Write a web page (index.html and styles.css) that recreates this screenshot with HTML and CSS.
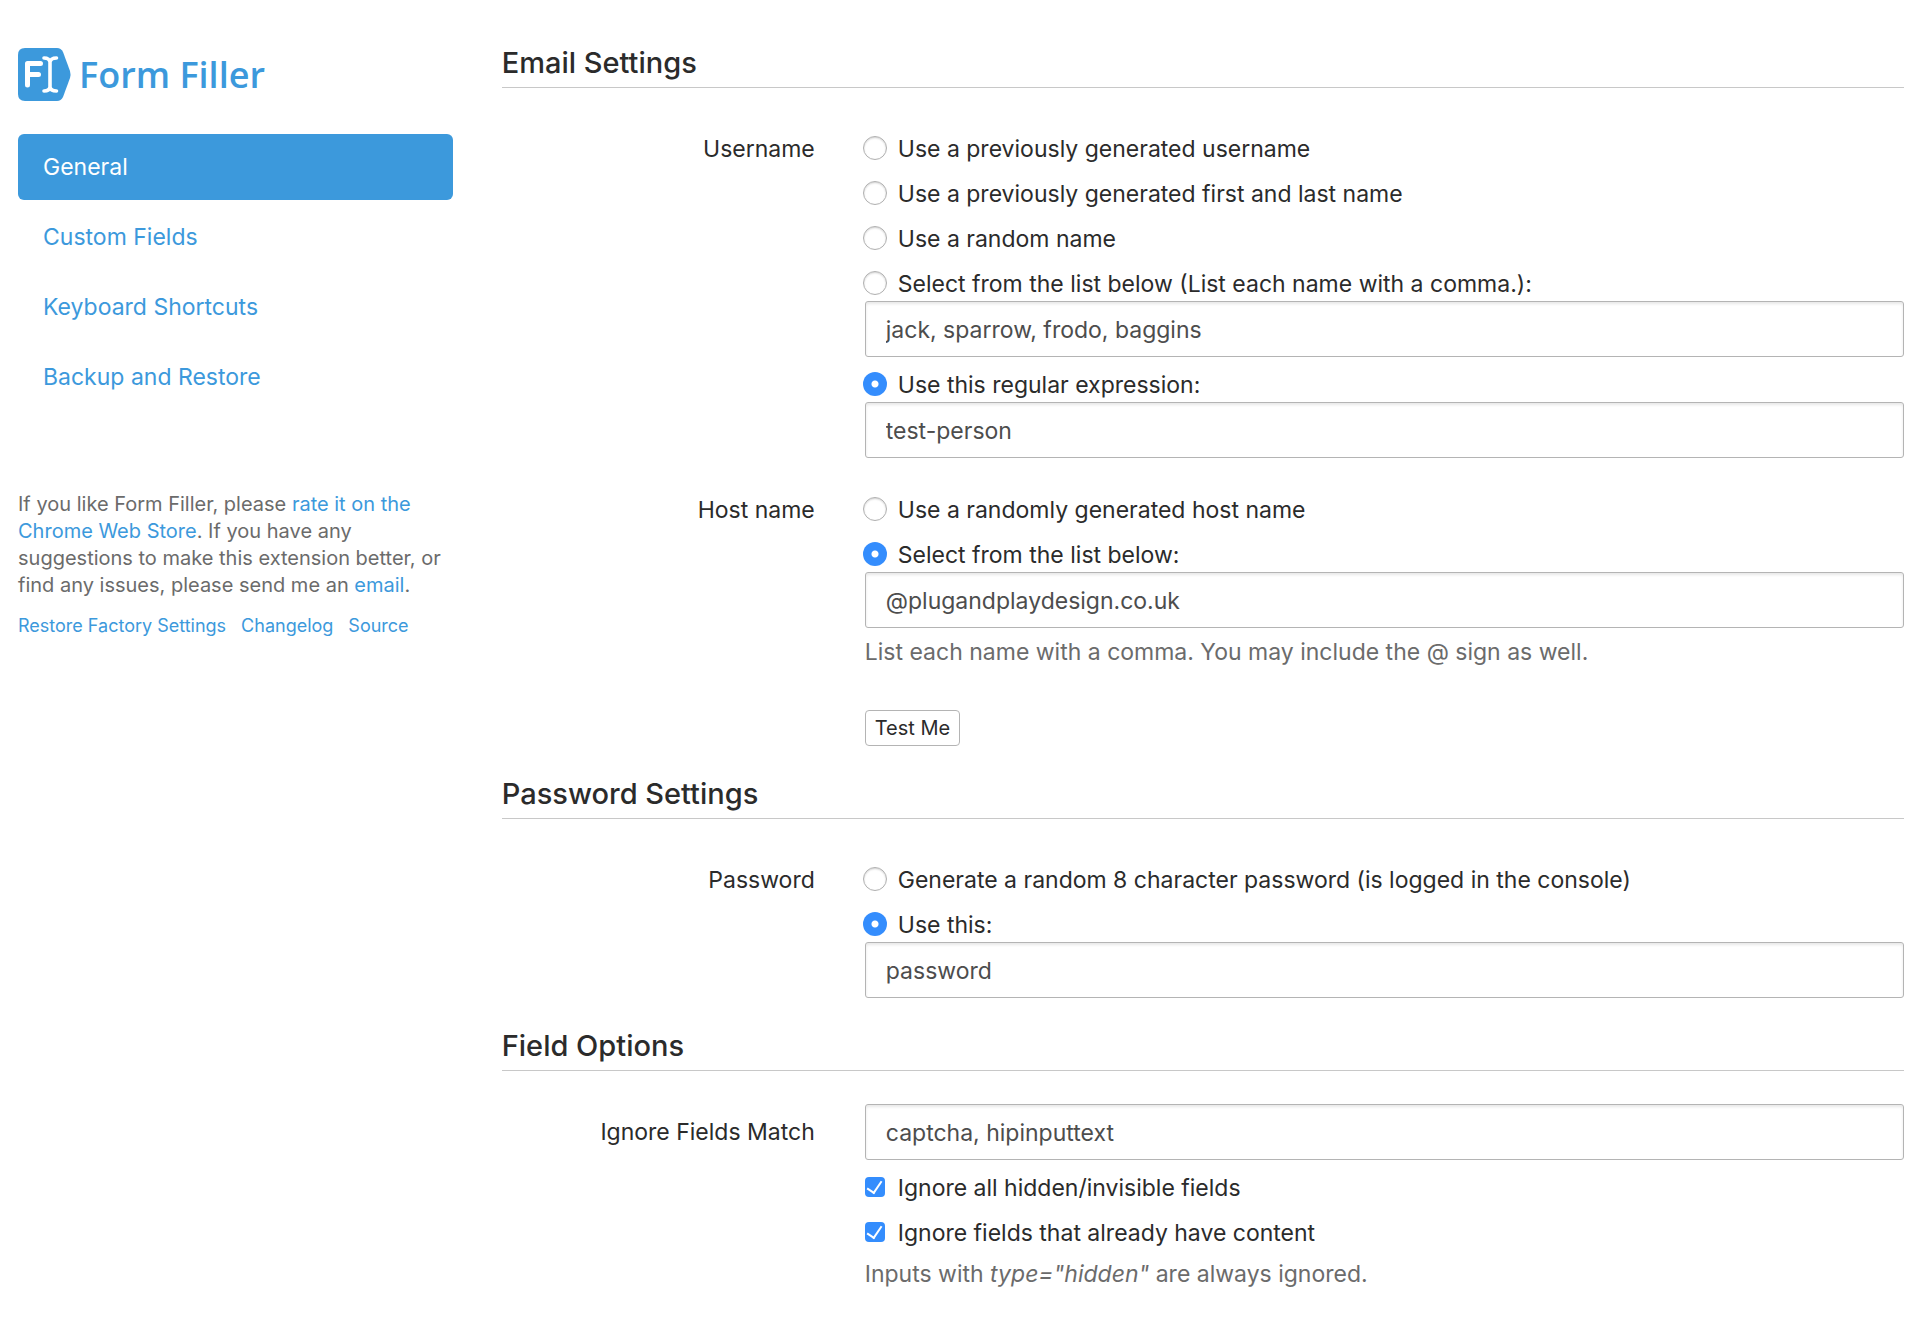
FILE: index.html
```html
<!DOCTYPE html>
<html lang="en">
<head>
<meta charset="utf-8">
<title>Form Filler</title>
<link rel="stylesheet" href="styles.css">
</head>
<body>
<div class="page">
  <aside class="sidebar">
    <div class="brand">
      <svg class="brand-mark" viewBox="0 0 53 53" aria-hidden="true">
        <path fill="#3c99dc" d="M7 0H39Q43 0 45 4L52 23Q53 26.500 52 30L45 49Q43 53 39 53H7Q0 53 0 46V7Q0 0 7 0Z"/>
        <path fill="none" stroke="#fff" stroke-width="5" stroke-linecap="round" stroke-linejoin="round" d="M9.500 37V15.500H22.500M9.500 26.500H20.500"/>
        <path fill="none" stroke="#fff" stroke-width="3.600" stroke-linecap="round" stroke-linejoin="round" d="M26 10C29.500 10 31.500 11 32 14C32.500 11 34.500 10 38.500 10M32 14V39M26 43C29.500 43 31.500 42 32 39C32.500 42 34.500 43 38.500 43"/>
      </svg>
      <span class="brand-name">Form Filler</span>
    </div>
    <nav class="nav">
      <a class="nav-link nav-link-active" href="#general">General</a>
      <a class="nav-link" href="#custom-fields">Custom Fields</a>
      <a class="nav-link" href="#keyboard-shortcuts">Keyboard Shortcuts</a>
      <a class="nav-link" href="#backup">Backup and Restore</a>
    </nav>
    <p class="note">If you like Form Filler, please <a href="#rate">rate it on the Chrome Web Store</a>. If you have any suggestions to make this extension better, or find any issues, please send me an <a href="#email">email</a>.</p>
    <div class="links">
      <a href="#restore">Restore Factory Settings</a>
      <a href="#changelog">Changelog</a>
      <a href="#source">Source</a>
    </div>
  </aside>

  <main>
    <form class="settings">
      <section>
        <h2 class="heading">Email Settings</h2>
        <div class="row" role="radiogroup" aria-labelledby="username-label">
          <div class="row-label" id="username-label">Username</div>
          <div class="fields">
            <label class="option"><input type="radio" name="username">Use a previously generated username</label>
            <label class="option"><input type="radio" name="username">Use a previously generated first and last name</label>
            <label class="option"><input type="radio" name="username">Use a random name</label>
            <label class="option"><input type="radio" name="username">Select from the list below (List each name with a comma.):</label>
            <input class="text" type="text" aria-label="Username list" value="jack, sparrow, frodo, baggins">
            <label class="option"><input type="radio" name="username" checked>Use this regular expression:</label>
            <input class="text" type="text" aria-label="Username regular expression" value="test-person">
          </div>
        </div>
        <div class="row" role="radiogroup" aria-labelledby="host-label">
          <div class="row-label" id="host-label">Host name</div>
          <div class="fields">
            <label class="option"><input type="radio" name="host">Use a randomly generated host name</label>
            <label class="option"><input type="radio" name="host" checked>Select from the list below:</label>
            <input class="text" type="text" aria-label="Host name list" value="@plugandplaydesign.co.uk">
            <p class="help">List each name with a comma. You may include the @ sign as well.</p>
            <button class="button" type="button">Test Me</button>
          </div>
        </div>
      </section>

      <section>
        <h2 class="heading">Password Settings</h2>
        <div class="row" role="radiogroup" aria-labelledby="password-label">
          <div class="row-label" id="password-label">Password</div>
          <div class="fields">
            <label class="option"><input type="radio" name="password">Generate a random 8 character password (is logged in the console)</label>
            <label class="option"><input type="radio" name="password" checked>Use this:</label>
            <input class="text" type="text" aria-label="Password" value="password">
          </div>
        </div>
      </section>

      <section>
        <h2 class="heading">Field Options</h2>
        <div class="row">
          <label class="row-label" for="ignore-match">Ignore Fields Match</label>
          <div class="fields">
            <input class="text" type="text" id="ignore-match" value="captcha, hipinputtext">
            <label class="option"><input type="checkbox" checked>Ignore all hidden/invisible fields</label>
            <label class="option"><input type="checkbox" checked>Ignore fields that already have content</label>
            <p class="help">Inputs with <em>type="hidden"</em> are always ignored.</p>
          </div>
        </div>
      </section>
    </form>
  </main>
</div>
</body>
</html>
```
FILE: styles.css
```css
* {
  box-sizing: border-box;
}

body {
  margin: 0;
  background: #fff;
  color: #2b2b2b;
  font-family: Inter, "Liberation Sans", sans-serif;
  font-size: 23px;
  line-height: 33px;
}

a {
  color: #3c99dc;
  text-decoration: none;
}

.page {
  display: grid;
  grid-template-columns: minmax(0, 31fr) minmax(0, 100fr);
  column-gap: 49px;
  padding: 43px 20px 32px 18px;
}

/* Sidebar */

.brand {
  display: flex;
  align-items: center;
  gap: 8px;
  padding-top: 5px;
}

.brand-mark {
  width: 53px;
  height: 53px;
}

.brand-name {
  color: #3c99dc;
  font-family: "Open Sans", "Noto Sans", sans-serif;
  font-size: 36px;
  font-weight: 600;
}

.nav {
  display: flex;
  flex-direction: column;
  gap: 4px;
  margin-top: 33px;
}

.nav-link {
  padding: 17px 25px 16px;
  border-radius: 6px;
}

.nav-link-active {
  background: #3c99dc;
  color: #fff;
}

.note {
  margin: 81px 0 0;
  color: #6b6b6b;
  font-size: 20px;
  line-height: 27px;
}

.links {
  display: flex;
  flex-wrap: wrap;
  gap: 0 15px;
  margin-top: 13px;
  font-size: 18px;
  line-height: 27px;
}

/* Settings form */

.settings {
  display: flex;
  flex-direction: column;
  gap: 28px;
}

.heading {
  margin: 0 0 33px;
  padding-bottom: 4px;
  border-bottom: 1px solid #c8c8c8;
  font-size: 29px;
  font-weight: 500;
  line-height: 40px;
}

.row {
  display: grid;
  grid-template-columns: minmax(0, 313fr) minmax(0, 1039fr);
  column-gap: 50px;
}

.row + .row {
  margin-top: 24px;
}

.row-label {
  padding-top: 12px;
  text-align: right;
}

.fields {
  display: flex;
  flex-direction: column;
}

.option {
  display: flex;
  align-items: center;
  gap: 11px;
  margin-left: -2px;
  padding-top: 12px;
}

.option input {
  appearance: none;
  flex: none;
  margin: 0 0 3px;
}

.option input[type="radio"] {
  width: 24px;
  height: 24px;
  border: 1px solid #b0b0b0;
  border-radius: 50%;
  background: #fff;
  box-shadow: inset 0 1px 2px #d0d0d0;
}

.option input[type="radio"]:checked {
  border: 0;
  background: radial-gradient(circle, #fff 3px, #348dfd 4px);
  box-shadow: none;
}

.option input[type="checkbox"] {
  display: grid;
  place-items: center;
  width: 20px;
  height: 20px;
  margin: 0 2px 3px;
  border-radius: 4px;
  background: #348dfd;
}

.option input[type="checkbox"]::before {
  content: "";
  width: 7px;
  height: 13px;
  margin-bottom: 3px;
  border: solid #fff;
  border-width: 0 2px 2px 0;
  transform: rotate(34deg);
}

.text {
  width: 100%;
  height: 56px;
  padding: 2px 20px 0;
  border: 1px solid #b4b4b4;
  border-radius: 3px;
  background: #fff;
  box-shadow: inset 0 2px 3px #e8e8e8;
  color: #4d4d4d;
  font: inherit;
}

.help {
  margin: 8px 0 0;
  color: #6b6b6b;
}

.button {
  align-self: flex-start;
  height: 36px;
  margin-top: 41px;
  padding: 0 9px;
  border: 1px solid #b4b4b4;
  border-radius: 4px;
  background: #fff;
  color: #2b2b2b;
  font: inherit;
  font-size: 20px;
}
```
